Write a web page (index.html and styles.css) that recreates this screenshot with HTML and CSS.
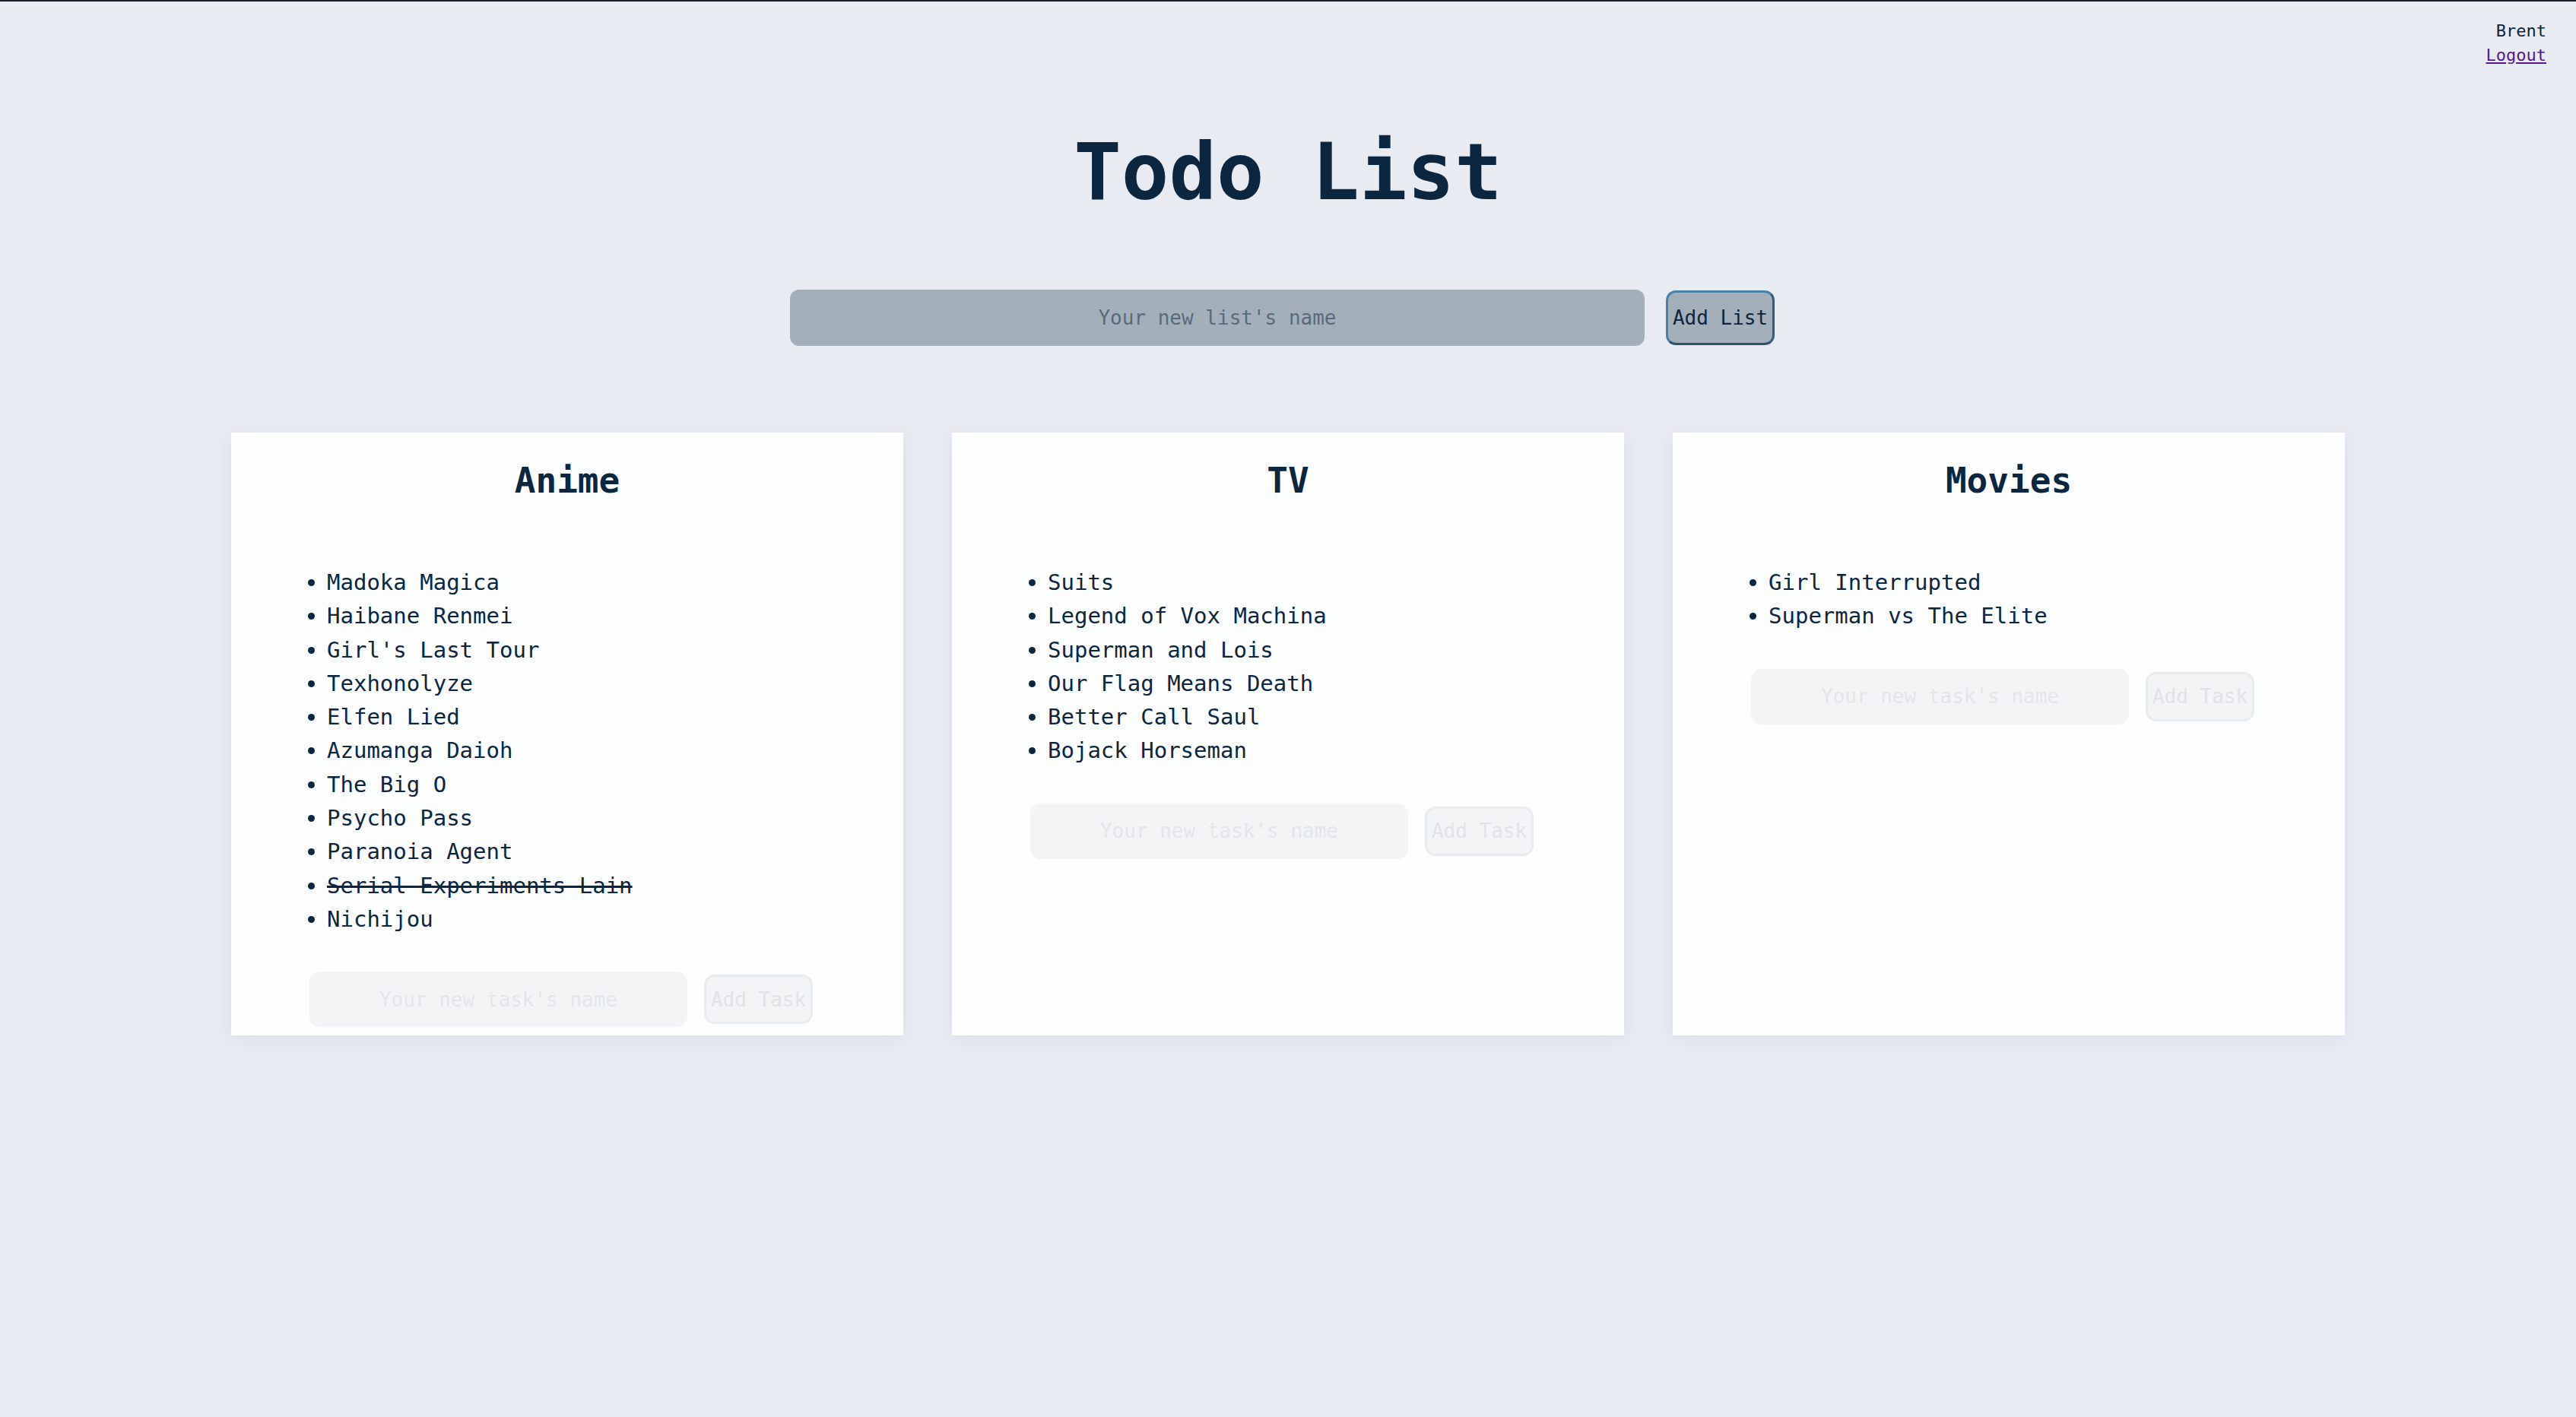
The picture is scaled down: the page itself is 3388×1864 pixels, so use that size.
FILE: index.html
```html
<!DOCTYPE html>
<html lang="en">
<head>
<meta charset="utf-8">
<title>Todo List</title>
<link rel="stylesheet" href="styles.css">
</head>
<body>
<header class="user">
  <div class="user-name">Brent</div>
  <a class="logout" href="#">Logout</a>
</header>
<h1 class="title">Todo List</h1>
<form class="list-form">
  <input class="list-input" type="text" placeholder="Your new list's name">
  <button class="list-btn" type="button">Add List</button>
</form>
<main class="lists">
  <section class="card">
    <h2 class="card-title">Anime</h2>
    <ul class="tasks">
      <li>Madoka Magica</li>
      <li>Haibane Renmei</li>
      <li>Girl's Last Tour</li>
      <li>Texhonolyze</li>
      <li>Elfen Lied</li>
      <li>Azumanga Daioh</li>
      <li>The Big O</li>
      <li>Psycho Pass</li>
      <li>Paranoia Agent</li>
      <li class="done">Serial Experiments Lain</li>
      <li>Nichijou</li>
    </ul>
    <form class="task-form">
      <input class="task-input" type="text" placeholder="Your new task's name">
      <button class="task-btn" type="button">Add Task</button>
    </form>
  </section>
  <section class="card">
    <h2 class="card-title">TV</h2>
    <ul class="tasks">
      <li>Suits</li>
      <li>Legend of Vox Machina</li>
      <li>Superman and Lois</li>
      <li>Our Flag Means Death</li>
      <li>Better Call Saul</li>
      <li>Bojack Horseman</li>
    </ul>
    <form class="task-form">
      <input class="task-input" type="text" placeholder="Your new task's name">
      <button class="task-btn" type="button">Add Task</button>
    </form>
  </section>
  <section class="card">
    <h2 class="card-title">Movies</h2>
    <ul class="tasks">
      <li>Girl Interrupted</li>
      <li>Superman vs The Elite</li>
    </ul>
    <form class="task-form">
      <input class="task-input" type="text" placeholder="Your new task's name">
      <button class="task-btn" type="button">Add Task</button>
    </form>
  </section>
</main>
</body>
</html>
```
FILE: styles.css
```css
html, body {
  margin: 0;
  padding: 0;
}
body {
  background: #e8ebf2;
  border-top: 2px solid #1d1f2d;
  font-family: "DejaVu Sans Mono", monospace;
  color: #0b2640;
  min-height: 1862px;
}
.user {
  text-align: right;
  padding: 23px 39px 0 0;
  font-size: 22px;
  line-height: 32px;
}
.logout {
  color: #551a8b;
}
.title {
  margin: 75px 0 0;
  text-align: center;
  font-size: 104px;
  line-height: 125px;
  font-weight: bold;
}
.list-form {
  margin-top: 92px;
  display: flex;
  justify-content: center;
  align-items: center;
  gap: 28px;
  padding-right: 15px;
}
.list-input {
  width: 1124px;
  height: 74px;
  box-sizing: border-box;
  border: none;
  border-radius: 12px;
  background: #a3b0bb;
  text-align: center;
  font-family: "DejaVu Sans Mono", monospace;
  font-size: 26px;
  color: #0b2640;
}
.list-input::placeholder {
  color: #586a7c;
}
.list-btn {
  width: 143px;
  height: 72px;
  box-sizing: border-box;
  border: 3px solid;
  border-color: #4682aa #2f5f7e #2a546e #4682aa;
  border-radius: 13px;
  background: #a3b0bb;
  font-family: "DejaVu Sans Mono", monospace;
  font-size: 26px;
  color: #0b2640;
  padding: 0;
}
.lists {
  margin: 114px auto 0;
  width: 2780px;
  display: grid;
  grid-template-columns: repeat(3, 1fr);
  gap: 64px;
  align-items: stretch;
}
.card {
  background: #fcfdfd;
  box-shadow: 0 4px 24px rgba(40, 50, 80, 0.07);
  padding: 36px 0 11px;
}
.card-title {
  margin: 0;
  text-align: center;
  font-size: 46px;
  line-height: 54px;
  font-weight: bold;
}
.tasks {
  margin: 85px 0 0;
  padding: 0 0 0 126px;
  font-size: 29px;
  line-height: 44.3px;
}
.done {
  text-decoration: line-through;
  text-decoration-thickness: 3px;
}
.task-form {
  margin-top: 47px;
  margin-left: 103px;
  display: flex;
  align-items: center;
  gap: 22px;
}
.task-input {
  width: 497px;
  height: 73px;
  box-sizing: border-box;
  border: none;
  border-radius: 14px;
  background: #f3f4f6;
  text-align: center;
  font-family: "DejaVu Sans Mono", monospace;
  font-size: 26px;
}
.task-input::placeholder {
  color: #e3e6e9;
}
.task-btn {
  width: 143px;
  height: 65px;
  box-sizing: border-box;
  border: 3px solid #e7ecef;
  border-radius: 14px;
  background: #f3f4f6;
  font-family: "DejaVu Sans Mono", monospace;
  font-size: 26px;
  color: #e0e3e6;
  padding: 0;
}
```
